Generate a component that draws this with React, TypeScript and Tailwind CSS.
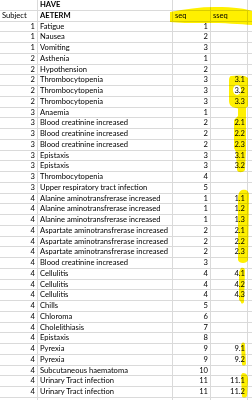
const rows: [number, string, number, string][] = [
  [1, 'Fatigue', 1, ''],
  [1, 'Nausea', 2, ''],
  [1, 'Vomiting', 3, ''],
  [2, 'Asthenia', 1, ''],
  [2, 'Hypothension', 2, ''],
  [2, 'Thrombocytopenia', 3, '3.1'],
  [2, 'Thrombocytopenia', 3, '3.2'],
  [2, 'Thrombocytopenia', 3, '3.3'],
  [3, 'Anaemia', 1, ''],
  [3, 'Blood creatinine increased', 2, '2.1'],
  [3, 'Blood creatinine increased', 2, '2.2'],
  [3, 'Blood creatinine increased', 2, '2.3'],
  [3, 'Epistaxis', 3, '3.1'],
  [3, 'Epistaxis', 3, '3.2'],
  [3, 'Thrombocytopenia', 4, ''],
  [3, 'Upper respiratory tract infection', 5, ''],
  [4, 'Alanine aminotransfrerase increased', 1, '1.1'],
  [4, 'Alanine aminotransfrerase increased', 1, '1.2'],
  [4, 'Alanine aminotransfrerase increased', 1, '1.3'],
  [4, 'Aspartate aminotransfrerase increased', 2, '2.1'],
  [4, 'Aspartate aminotransfrerase increased', 2, '2.2'],
  [4, 'Aspartate aminotransfrerase increased', 2, '2.3'],
  [4, 'Blood creatinine increased', 3, ''],
  [4, 'Cellulitis', 4, '4.1'],
  [4, 'Cellulitis', 4, '4.2'],
  [4, 'Cellulitis', 4, '4.3'],
  [4, 'Chills', 5, ''],
  [4, 'Chloroma', 6, ''],
  [4, 'Cholelithiasis', 7, ''],
  [4, 'Epistaxis', 8, ''],
  [4, 'Pyrexia', 9, '9.1'],
  [4, 'Pyrexia', 9, '9.2'],
  [4, 'Subcutaneous haematoma', 10, ''],
  [4, 'Urinary Tract infection', 11, '11.1'],
  [4, 'Urinary Tract infection', 11, '11.2'],
  [0, '', 0, ''],
]

const cell = 'h-[10.75px] border-r border-b border-[#dadada] flex items-end pb-[1px] overflow-hidden whitespace-nowrap'

function Row({ a, b, c, d, boldB }: { a: string; b: string; c: string; d: string; boldB?: boolean }) {
  return (
    <div className="flex">
      <div className={`${cell} w-[38px] justify-end pr-[2px]`}>{a}</div>
      <div className={`${cell} w-[135px] pl-[2px] ${boldB ? 'font-bold' : ''}`}>{b}</div>
      <div className={`${cell} w-[38px] justify-end pr-[2px]`}>{c}</div>
      <div className={`${cell} w-[37px] justify-end pr-[2px]`}>{d}</div>
      <div className={`${cell} flex-1 border-r-0`}></div>
    </div>
  )
}

export default function App() {
  return (
    <div className="relative w-[252px] h-[400px] overflow-hidden bg-white text-black text-[7.6px] leading-none font-['Lato',sans-serif]">
      <Row a="" b="HAVE" c="" d="" boldB />
      <div className="flex">
        <div className={`${cell} w-[38px] pl-[2px]`}>Subject</div>
        <div className={`${cell} w-[135px] pl-[2px] font-bold`}>AETERM</div>
        <div className={`${cell} w-[38px] pl-[2px]`}>seq</div>
        <div className={`${cell} w-[37px] pl-[2px]`}>sseq</div>
        <div className={`${cell} flex-1 border-r-0`}></div>
      </div>
      {rows.map((r, i) => (
        <Row key={i} a={r[0] ? String(r[0]) : ''} b={r[1]} c={r[2] ? String(r[2]) : ''} d={r[3]} />
      ))}

      {/* highlighter marks */}
      <svg className="absolute left-0 top-0 mix-blend-multiply pointer-events-none" width="252" height="400" viewBox="0 0 252 400">
        <g fill="#fff000">
          <path d="M170,12 C185,9 200,7 215,7 C235,7 246,9 252,11 L252,25 C240,24 225,23 205,23 C190,23 178,23 170,22 Z" />
          <path d="M231,76 C238,75 246,75 248,78 L248,106 C247,109 240,109 236,108 C230,107 229,104 229,100 L229,80 C229,78 230,76 231,76 Z" />
          <path d="M238,106 L246,106 L246,118 L246,150 L245,170 C243,173 238,173 237,170 L236,152 L234,148 L234,120 L238,116 Z" />
          <path d="M242,190 C246,189 249,191 249,195 L248,260 C247,264 239,264 238,260 L238,200 C238,194 239,191 242,190 Z" />
          <path d="M241,268 C244,267 245,269 245,271 L244,302 C243,304 241,304 241,302 L239,300 L239,272 Z" />
          <path d="M242,343 C244,342 245,343 245,345 L246,364 C245,366 242,366 242,364 L241,345 Z" />
          <path d="M243,373 C247,373 248,376 248,380 L247,396 C246,398 242,398 242,396 L241,377 C241,374 242,373 243,373 Z" />
        </g>
        <ellipse cx="237" cy="90" rx="4" ry="5" fill="#ffffff" />
      </svg>
    </div>
  )
}
